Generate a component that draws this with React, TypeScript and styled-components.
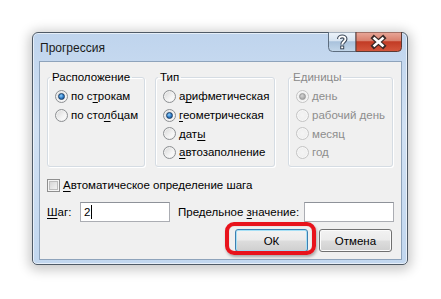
import React from "react";
import styled, { createGlobalStyle } from "styled-components";

const GlobalStyle = createGlobalStyle`
  html, body { margin: 0; padding: 0; background: #ffffff; }
  body { font-family: "Liberation Sans", Arial, sans-serif; font-size: 11px; color: #000; }
  * { box-sizing: border-box; }
`;

const Page = styled.div`
  padding: 32px 0 0 32px;
  width: 441px;
  height: 299px;
`;

const Window = styled.div`
  width: 376px;
  height: 233px;
  border: 1px solid #4f5a66;
  border-radius: 6px 6px 5px 5px;
  background: linear-gradient(180deg, #bfd4ed 0%, #d1e1f3 40%, #c2d7ef 100%);
  box-shadow: 0 0 0 1px rgba(255,255,255,0.6) inset, 0 2px 12px 3px rgba(0,0,0,0.22);
  display: flex;
  flex-direction: column;
`;

const TitleBar = styled.div`
  height: 28px;
  display: flex;
  flex-direction: row;
  align-items: flex-start;
  padding: 0 5px 0 7px;
  flex: none;
`;

const Title = styled.div`
  padding-top: 8px;
  font-size: 12px;
  color: #1a1a1a;
  flex: 1;
`;

const Caption = styled.div`
  width: 74px;
  height: 20px;
  margin-top: -1px;
  flex: none;
  display: block;
  svg { display: block; }
`;

const Client = styled.div`
  flex: 1;
  margin: 0 5px 4px 6px;
  background: #f0f0f0;
  border: 1px solid #8ea3bb;
  padding: 8px 8px 0 7px;
  display: flex;
  flex-direction: column;
`;

const GroupsRow = styled.div`
  display: flex;
`;

const Group = styled.fieldset<{ $w: number; $ml: number }>`
  margin: 0 0 0 ${(p) => p.$ml}px;
  width: ${(p) => p.$w}px;
  height: 97px;
  border: 1px solid #d5dce3;
  border-radius: 3px;
  padding: 0;
  min-width: 0;
  flex: none;
  box-shadow: 1px 1px 0 #ffffff inset, 1px 1px 0 #ffffff;
`;

const Legend = styled.legend<{ $disabled?: boolean }>`
  padding: 0 2px;
  margin-left: 2px;
  line-height: 14px;
  font-size: 11.5px;
  color: ${(p) => (p.$disabled ? "#8a8a8a" : "#000")};
`;

const Options = styled.div`
  padding: 3px 0 0 7px;
`;

const OptionRow = styled.div<{ $disabled?: boolean }>`
  height: 18.7px;
  display: flex;
  align-items: center;
  gap: 3px;
  font-size: 11.5px;
  white-space: nowrap;
  color: ${(p) => (p.$disabled ? "#8d8d8d" : "#000")};
  u { text-underline-offset: 2px; text-decoration-thickness: 1px; }
`;

const Radio = styled.span<{ $checked?: boolean; $disabled?: boolean }>`
  width: 13px;
  height: 13px;
  border-radius: 50%;
  flex: none;
  border: 1px solid ${(p) => (p.$disabled ? "#c4c4c4" : "#8c8f92")};
  background: ${(p) =>
    p.$disabled
      ? "radial-gradient(circle at 50% 50%, #f4f4f4 0%, #ececec 100%)"
      : "linear-gradient(135deg, #d6d6d6 0%, #f4f4f4 60%, #ffffff 100%)"};
  box-shadow: inset 0 0 0 1px ${(p) => (p.$disabled ? "#f7f7f7" : "#f1f1f1")};
  display: flex;
  align-items: center;
  justify-content: center;
  &::after {
    content: "";
    display: ${(p) => (p.$checked ? "block" : "none")};
    width: 7px;
    height: 7px;
    border-radius: 50%;
    background: ${(p) =>
      p.$disabled
        ? "radial-gradient(circle at 40% 35%, #d5d5d5 0%, #a3a3a3 80%)"
        : "radial-gradient(circle at 40% 35%, #8fd2ff 0%, #2c78c4 55%, #1a4f8a 100%)"};
    border: 1px solid ${(p) => (p.$disabled ? "#9a9a9a" : "#1c3f66")};
    box-sizing: border-box;
  }
`;

const CheckRow = styled.div`
  margin-top: 11px;
  height: 14px;
  display: flex;
  align-items: center;
  gap: 3px;
  font-size: 11.5px;
  u { text-underline-offset: 2px; text-decoration-thickness: 1px; }
`;

const CheckBox = styled.span`
  width: 13px;
  height: 13px;
  flex: none;
  border: 1px solid #8f8f8f;
  background: linear-gradient(135deg, #cfcfcf 0%, #e9e9e9 60%, #f7f7f7 100%);
  box-shadow: inset 0 0 0 1px #f5f5f5, inset 0 0 0 2px #bdbdbd;
`;

const StepRow = styled.div`
  margin-top: 10px;
  display: flex;
  align-items: center;
  font-size: 11.5px;
  u { text-underline-offset: 2px; text-decoration-thickness: 1px; }
`;

const FieldLabel = styled.span<{ $w: number; $pl?: number }>`
  width: ${(p) => p.$w}px;
  padding-left: ${(p) => p.$pl ?? 0}px;
  white-space: nowrap;
  flex: none;
  overflow: visible;
`;

const TextBox = styled.div`
  width: 90px;
  height: 20px;
  border: 1px solid #abadb3;
  border-top-color: #8e9299;
  background: #ffffff;
  display: flex;
  align-items: center;
  padding-left: 3px;
  font-size: 11.5px;
  flex: none;
`;

const Caret = styled.span`
  width: 1px;
  height: 14px;
  background: #000;
  margin-left: 1px;
`;

const ButtonRow = styled.div`
  margin-top: 7px;
  display: flex;
  justify-content: flex-end;
  gap: 11px;
  padding-right: 1px;
`;

const ButtonWrap = styled.div`
  position: relative;
`;

const Button = styled.div<{ $default?: boolean }>`
  width: 73px;
  height: 23px;
  border: 1px solid ${(p) => (p.$default ? "#3c7fb1" : "#707070")};
  border-radius: 3px;
  background: linear-gradient(180deg, #f2f2f2 0%, #ebebeb 48%, #dddddd 52%, #cfcfcf 100%);
  box-shadow: inset 0 0 0 1px ${(p) => (p.$default ? "#a6e0f6" : "#fbfbfb")};
  display: flex;
  align-items: center;
  justify-content: center;
  font-size: 11.5px;
  color: #000;
`;

const Highlight = styled.div`
  position: absolute;
  left: -10px;
  top: -7px;
  width: 91px;
  height: 33px;
  border: 4px solid #e8131c;
  border-radius: 9px;
  box-shadow: 1px 2px 3px rgba(0,0,0,0.3), inset 0 0 1px rgba(120,0,0,0.4);
  pointer-events: none;
`;

function CaptionButtons() {
  return (
    <svg width="74" height="20" viewBox="0 0 74 20">
      <defs>
        <linearGradient id="helpG" x1="0" y1="0" x2="0" y2="1">
          <stop offset="0" stopColor="#eef4fa" />
          <stop offset="0.45" stopColor="#d7e4f1" />
          <stop offset="0.5" stopColor="#a9c2dc" />
          <stop offset="1" stopColor="#c3d7ea" />
        </linearGradient>
        <linearGradient id="closeG" x1="0" y1="0" x2="0" y2="1">
          <stop offset="0" stopColor="#e9a99b" />
          <stop offset="0.45" stopColor="#d9806d" />
          <stop offset="0.5" stopColor="#c23b25" />
          <stop offset="1" stopColor="#d4573d" />
        </linearGradient>
      </defs>
      <path d="M0.5 0 V15.5 Q0.5 19.5 4.5 19.5 H28 V0 Z" fill="url(#helpG)" stroke="#5d6d7f" strokeWidth="1" />
      <path d="M28 0 V19.5 H69.5 Q73.5 19.5 73.5 15.5 V0 Z" fill="url(#closeG)" stroke="#5a3a35" strokeWidth="1" />
      <path d="M11 7 C11 3.5 17.5 3.5 17.5 7 C17.5 9.5 14.2 9.5 14.2 12.5" fill="none" stroke="#3a4656" strokeWidth="4" />
      <path d="M11 7 C11 3.5 17.5 3.5 17.5 7 C17.5 9.5 14.2 9.5 14.2 12.5" fill="none" stroke="#ffffff" strokeWidth="1.8" />
      <rect x="12.2" y="13.5" width="4" height="3.8" fill="#3a4656" />
      <rect x="13.2" y="14.5" width="2" height="1.8" fill="#ffffff" />
      <path d="M46 6 L55 14 M55 6 L46 14" stroke="#3a2a28" strokeWidth="5" strokeLinecap="square" />
      <path d="M46.5 6.5 L54.5 13.5 M54.5 6.5 L46.5 13.5" stroke="#ffffff" strokeWidth="2.6" strokeLinecap="square" />
    </svg>
  );
}

export default function App() {
  return (
    <Page>
      <GlobalStyle />
      <Window>
        <TitleBar>
          <Title>Прогрессия</Title>
          <Caption>
            <CaptionButtons />
          </Caption>
        </TitleBar>
        <Client>
          <GroupsRow>
            <Group $w={98} $ml={0}>
              <Legend>Расположение</Legend>
              <Options>
                <OptionRow>
                  <Radio $checked />
                  <span>по с<u>т</u>рокам</span>
                </OptionRow>
                <OptionRow>
                  <Radio />
                  <span>по сто<u>л</u>бцам</span>
                </OptionRow>
              </Options>
            </Group>
            <Group $w={120} $ml={10}>
              <Legend>Тип</Legend>
              <Options>
                <OptionRow>
                  <Radio />
                  <span>а<u>р</u>ифметическая</span>
                </OptionRow>
                <OptionRow>
                  <Radio $checked />
                  <span><u>г</u>еометрическая</span>
                </OptionRow>
                <OptionRow>
                  <Radio />
                  <span>дат<u>ы</u></span>
                </OptionRow>
                <OptionRow>
                  <Radio />
                  <span><u>а</u>втозаполнение</span>
                </OptionRow>
              </Options>
            </Group>
            <Group $w={105} $ml={13}>
              <Legend $disabled>Единицы</Legend>
              <Options>
                <OptionRow $disabled>
                  <Radio $checked $disabled />
                  <span>день</span>
                </OptionRow>
                <OptionRow $disabled>
                  <Radio $disabled />
                  <span>рабочий день</span>
                </OptionRow>
                <OptionRow $disabled>
                  <Radio $disabled />
                  <span>месяц</span>
                </OptionRow>
                <OptionRow $disabled>
                  <Radio $disabled />
                  <span>год</span>
                </OptionRow>
              </Options>
            </Group>
          </GroupsRow>
          <CheckRow>
            <CheckBox />
            <span><u>А</u>втоматическое определение шага</span>
          </CheckRow>
          <StepRow>
            <FieldLabel $w={33} $pl={0}>
              <u>Ш</u>аг:
            </FieldLabel>
            <TextBox>
              2<Caret />
            </TextBox>
            <FieldLabel $w={134} $pl={8}>
              Предельное <u>з</u>начение:
            </FieldLabel>
            <TextBox />
          </StepRow>
          <ButtonRow>
            <ButtonWrap>
              <Button $default>ОК</Button>
              <Highlight />
            </ButtonWrap>
            <ButtonWrap>
              <Button>Отмена</Button>
            </ButtonWrap>
          </ButtonRow>
        </Client>
      </Window>
    </Page>
  );
}
